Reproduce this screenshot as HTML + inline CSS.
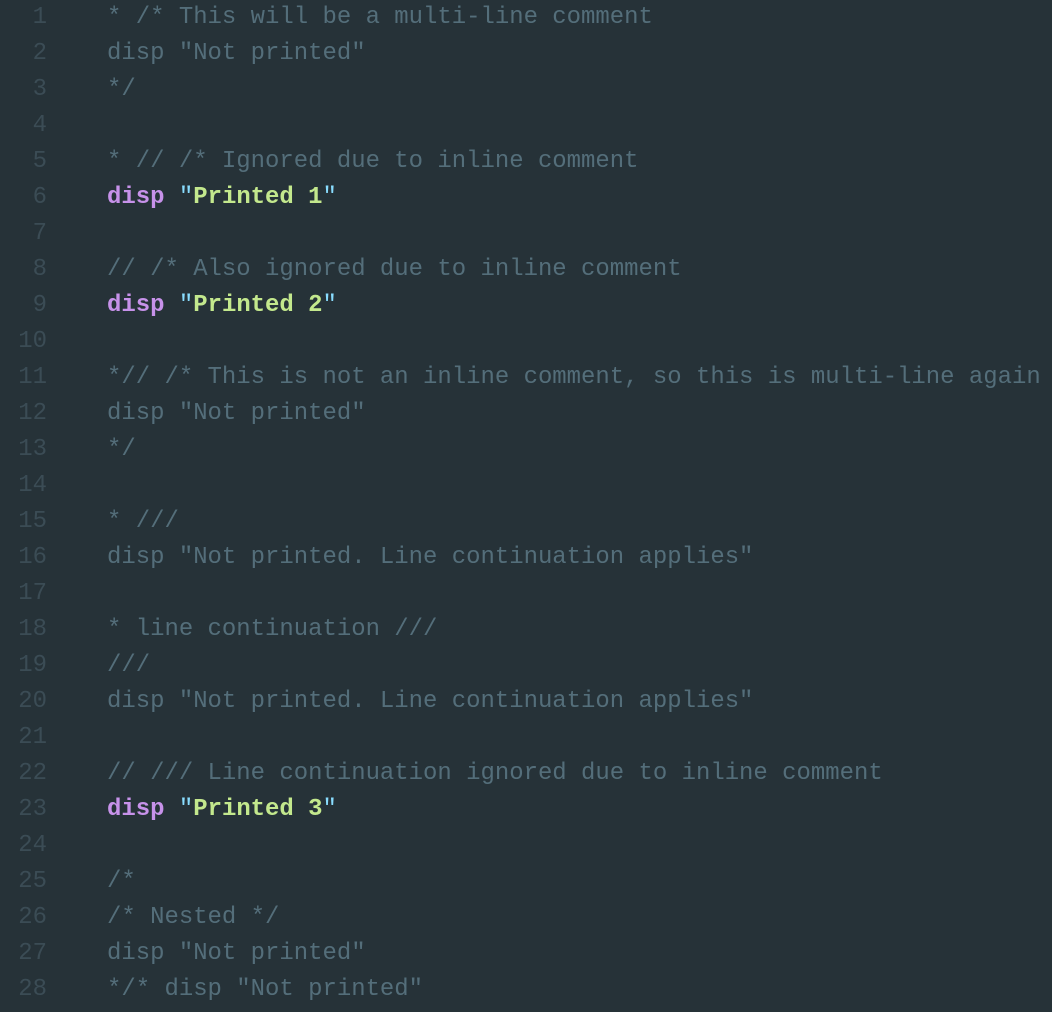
<!DOCTYPE html>
<html><head><style>
html,body{margin:0;padding:0;background:#263238;width:1052px;height:1012px;overflow:hidden}
.w{position:absolute;top:0px;left:0;font-family:"Liberation Mono",monospace;font-size:23.95px;line-height:36px;white-space:pre}
.n{position:absolute;left:0;width:47px;text-align:right;color:#3b4c55}
.c{position:absolute;left:107px;color:#546e7a}
.k{color:#c792ea;font-weight:bold}.s{color:#c3e88d;font-weight:bold}.q{color:#89ddff}
</style></head><body>
<div class="w"><div class="n">1
2
3
4
5
6
7
8
9
10
11
12
13
14
15
16
17
18
19
20
21
22
23
24
25
26
27
28</div><div class="c">* /* This will be a multi-line comment
disp "Not printed"
*/

* // /* Ignored due to inline comment
<span class="k">disp</span> <span class="q">"</span><span class="s">Printed 1</span><span class="q">"</span>

// /* Also ignored due to inline comment
<span class="k">disp</span> <span class="q">"</span><span class="s">Printed 2</span><span class="q">"</span>

*// /* This is not an inline comment, so this is multi-line again
disp "Not printed"
*/

* ///
disp "Not printed. Line continuation applies"

* line continuation ///
///
disp "Not printed. Line continuation applies"

// /// Line continuation ignored due to inline comment
<span class="k">disp</span> <span class="q">"</span><span class="s">Printed 3</span><span class="q">"</span>

/*
/* Nested */
disp "Not printed"
*/* disp "Not printed"</div></div>
</body></html>
